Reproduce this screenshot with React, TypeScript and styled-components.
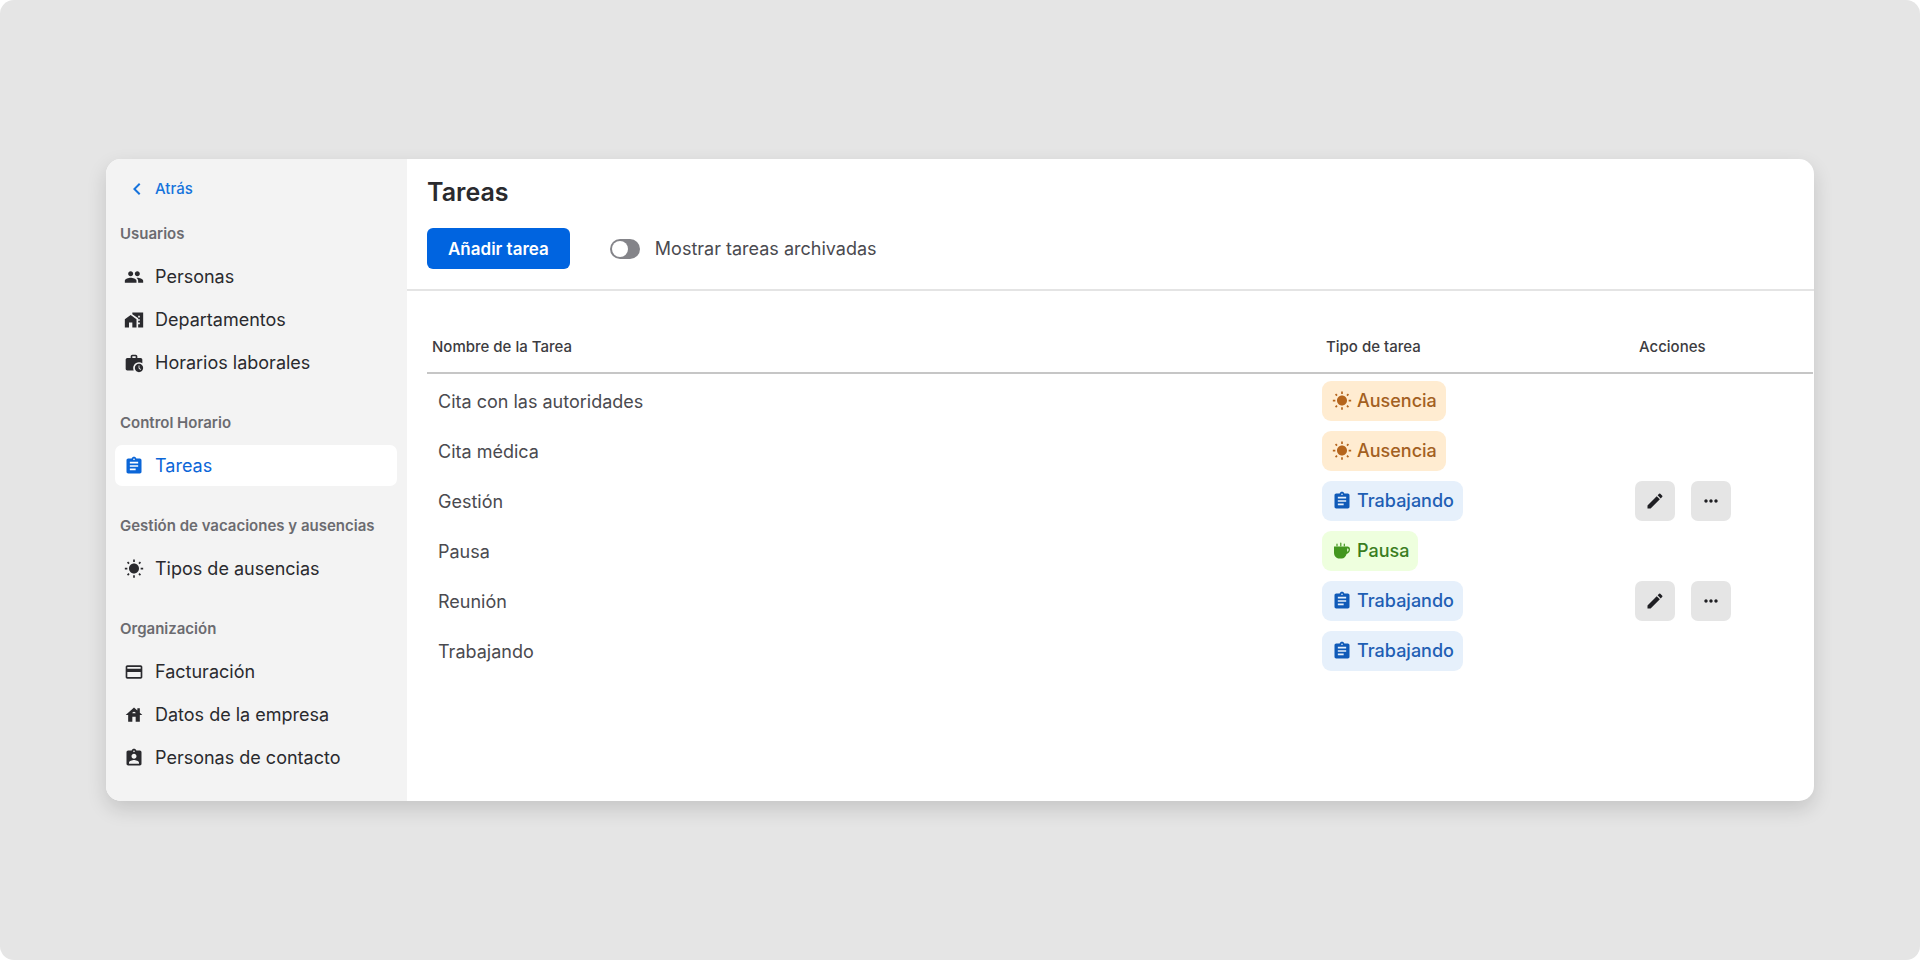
import React from 'react';
import styled, { createGlobalStyle, css } from 'styled-components';
import {
  MdAssignment,
  MdAssignmentInd,
  MdChevronLeft,
  MdCreditCard,
  MdEdit,
  MdGroup,
  MdHomeWork,
  MdHouse,
  MdMoreHoriz,
  MdWbSunny,
  MdWorkHistory,
} from 'react-icons/md';

const GlobalStyle = createGlobalStyle`
  *, *::before, *::after { box-sizing: border-box; }
  body {
    margin: 0;
    background: #fff;
    font-family: Inter, Roboto, "Liberation Sans", sans-serif;
    color: #2a2a2e;
  }
  button, input { font: inherit; }
`;

const Page = styled.div`
  min-height: 100vh;
  display: flex;
  align-items: center;
  padding: 40px 106px;
  background: #e5e5e5;
  border-radius: 14px;
`;

const Window = styled.div`
  flex: 1;
  min-width: 0;
  display: flex;
  border-radius: 15px;
  overflow: hidden;
  background: #fff;
  box-shadow: 0 8px 20px rgba(0, 0, 0, 0.14);
`;

const Sidebar = styled.nav`
  flex: 0 0 301px;
  display: flex;
  flex-direction: column;
  padding: 20px 10px 23px 9px;
  background: #f3f3f3;
`;

const BackLink = styled.a`
  display: flex;
  align-items: center;
  gap: 6px;
  height: 20px;
  margin: 0 0 25px 10px;
  font-size: 15px;
  line-height: 20px;
  font-weight: 500;
  color: #1673dc;
  text-decoration: none;
`;

const Sections = styled.div`
  display: flex;
  flex-direction: column;
  gap: 30px;
`;

const SectionTitle = styled.h2`
  margin: 0 0 12px;
  padding-left: 5px;
  font-size: 15px;
  line-height: 20px;
  font-weight: 600;
  color: #6b6b70;
  white-space: nowrap;
`;

const NavList = styled.ul`
  display: flex;
  flex-direction: column;
  gap: 2px;
  margin: 0;
  padding: 0;
  list-style: none;
`;

const NavLink = styled.a<{ $active?: boolean }>`
  display: flex;
  align-items: center;
  gap: 11px;
  height: 41px;
  padding: 0 9px;
  border-radius: 7px;
  font-size: 18px;
  line-height: 24px;
  color: #2a2a2e;
  text-decoration: none;
  white-space: nowrap;
  ${(p) =>
    p.$active &&
    css`
      background: #fff;
      color: #0b66d8;
    `}
`;

const Main = styled.main`
  flex: 1;
  min-width: 0;
`;

const Header = styled.header`
  padding: 17px 20px 20px;
  border-bottom: 2px solid #e4e4e4;
`;

const Title = styled.h1`
  margin: 0 0 20px;
  font-size: 25px;
  line-height: 32px;
  font-weight: 600;
  color: #2a2a2e;
`;

const Toolbar = styled.div`
  display: flex;
  align-items: center;
  gap: 40px;
`;

const PrimaryButton = styled.button`
  height: 41px;
  padding: 0 21px;
  border: 0;
  border-radius: 6px;
  background: #0064e0;
  color: #fff;
  font-size: 17px;
  font-weight: 600;
`;

const SwitchLabel = styled.label`
  display: flex;
  align-items: center;
  gap: 15px;
  font-size: 18px;
  line-height: 24px;
  color: #4a4a4f;
`;

const Switch = styled.input`
  appearance: none;
  display: flex;
  width: 30px;
  height: 20px;
  margin: 0;
  padding: 2px;
  border-radius: 10px;
  background: #848489;
  &::before {
    content: '';
    width: 16px;
    height: 16px;
    border-radius: 50%;
    background: #fff;
  }
  &:checked {
    justify-content: flex-end;
    background: #0064e0;
  }
`;

const TableArea = styled.div`
  padding: 30px 1px 0 20px;
`;

const Table = styled.table`
  width: 100%;
  table-layout: fixed;
  border-collapse: separate;
  border-spacing: 0;
`;

const HeadCell = styled.th<{ $width?: number }>`
  width: ${(p) => (p.$width ? `${p.$width}px` : 'auto')};
  height: 53px;
  padding: 0 5px;
  border-bottom: 2px solid #c6c6c6;
  text-align: left;
  font-size: 15px;
  line-height: 20px;
  font-weight: 500;
  color: #3c3c41;
`;

const Cell = styled.td<{ $text?: boolean }>`
  height: 50px;
  padding: ${(p) => (p.$text ? '6px 11px 0' : '4px 1px 0')};
  font-size: 18px;
  line-height: 24px;
  color: #4a4a4f;
`;

type Kind = 'absence' | 'work' | 'break';

const tones: Record<Kind, { bg: string; fg: string; icon: string }> = {
  absence: { bg: '#ffecd1', fg: '#a3601f', icon: '#b5651d' },
  work: { bg: '#e6f0fb', fg: '#1f5fb4', icon: '#0f5ab8' },
  break: { bg: '#eeffde', fg: '#3a7d1e', icon: '#43971f' },
};

const Badge = styled.span<{ $kind: Kind }>`
  display: inline-flex;
  align-items: center;
  gap: 5px;
  height: 40px;
  padding: 0 9px 0 10px;
  border-radius: 9px;
  font-size: 18px;
  font-weight: 500;
  vertical-align: middle;
  background: ${(p) => tones[p.$kind].bg};
  color: ${(p) => tones[p.$kind].fg};
  svg { color: ${(p) => tones[p.$kind].icon}; }
`;

const Actions = styled.div`
  display: flex;
  gap: 16px;
`;

const IconButton = styled.button`
  display: flex;
  align-items: center;
  justify-content: center;
  width: 40px;
  height: 40px;
  padding: 0;
  border: 0;
  border-radius: 7px;
  background: #e5e5e5;
  color: #1f1f23;
`;

function CupIcon({ size }: { size: number }) {
  return (
    <svg width={size} height={size} viewBox="0 0 20 20" aria-hidden="true">
      <path
        fill="currentColor"
        fillRule="evenodd"
        d="M2 5.500h13.400c1.600 0 2.600 1.100 2.600 2.700 0 2.300-1.300 4.200-3.400 4.800-.8 2.700-2.600 4.500-4.900 4.500H7.300C4.200 17.500 2 15 2 11.500zm13.200 1.900v3.400c.9-.4 1.400-1.200 1.400-2.300 0-.7-.4-1.100-1.400-1.100z"
      />
      <path
        d="M5 3.200v1.600M8.800 2.200v2.600M12.300 3.200v1.600"
        fill="none"
        stroke="currentColor"
        strokeWidth="1.200"
        strokeLinecap="round"
      />
    </svg>
  );
}

const sections = [
  {
    title: 'Usuarios',
    items: [
      { label: 'Personas', Icon: MdGroup },
      { label: 'Departamentos', Icon: MdHomeWork },
      { label: 'Horarios laborales', Icon: MdWorkHistory },
    ],
  },
  { title: 'Control Horario', items: [{ label: 'Tareas', Icon: MdAssignment, active: true }] },
  {
    title: 'Gestión de vacaciones y ausencias',
    items: [{ label: 'Tipos de ausencias', Icon: MdWbSunny }],
  },
  {
    title: 'Organización',
    items: [
      { label: 'Facturación', Icon: MdCreditCard },
      { label: 'Datos de la empresa', Icon: MdHouse },
      { label: 'Personas de contacto', Icon: MdAssignmentInd },
    ],
  },
] as { title: string; items: { label: string; Icon: React.ComponentType<{ size: number }>; active?: boolean }[] }[];

const kinds = {
  absence: { label: 'Ausencia', Icon: MdWbSunny },
  work: { label: 'Trabajando', Icon: MdAssignment },
  break: { label: 'Pausa', Icon: CupIcon },
};

const tasks: { name: string; kind: Kind; editable?: boolean }[] = [
  { name: 'Cita con las autoridades', kind: 'absence' },
  { name: 'Cita médica', kind: 'absence' },
  { name: 'Gestión', kind: 'work', editable: true },
  { name: 'Pausa', kind: 'break' },
  { name: 'Reunión', kind: 'work', editable: true },
  { name: 'Trabajando', kind: 'work' },
];

export default function App() {
  return (
    <>
      <GlobalStyle />
      <Page>
        <Window>
          <Sidebar>
            <BackLink href="#">
              <MdChevronLeft size={24} />
              Atrás
            </BackLink>
            <Sections>
              {sections.map((section) => (
                <section key={section.title}>
                  <SectionTitle>{section.title}</SectionTitle>
                  <NavList>
                    {section.items.map(({ label, Icon, active }) => (
                      <li key={label}>
                        <NavLink href="#" $active={active} aria-current={active ? 'page' : undefined}>
                          <Icon size={20} />
                          {label}
                        </NavLink>
                      </li>
                    ))}
                  </NavList>
                </section>
              ))}
            </Sections>
          </Sidebar>
          <Main>
            <Header>
              <Title>Tareas</Title>
              <Toolbar>
                <PrimaryButton type="button">Añadir tarea</PrimaryButton>
                <SwitchLabel htmlFor="archived">
                  <Switch id="archived" type="checkbox" role="switch" />
                  Mostrar tareas archivadas
                </SwitchLabel>
              </Toolbar>
            </Header>
            <TableArea>
              <Table>
                <thead>
                  <tr>
                    <HeadCell scope="col">Nombre de la Tarea</HeadCell>
                    <HeadCell scope="col" $width={313}>Tipo de tarea</HeadCell>
                    <HeadCell scope="col" $width={179}>Acciones</HeadCell>
                  </tr>
                </thead>
                <tbody>
                  {tasks.map(({ name, kind, editable }) => {
                    const { label, Icon } = kinds[kind];
                    return (
                      <tr key={name}>
                        <Cell $text>{name}</Cell>
                        <Cell>
                          <Badge $kind={kind}>
                            <Icon size={20} />
                            {label}
                          </Badge>
                        </Cell>
                        <Cell>
                          {editable && (
                            <Actions>
                              <IconButton type="button" aria-label={`Editar ${name}`}>
                                <MdEdit size={20} />
                              </IconButton>
                              <IconButton type="button" aria-label={`Más opciones de ${name}`}>
                                <MdMoreHoriz size={20} />
                              </IconButton>
                            </Actions>
                          )}
                        </Cell>
                      </tr>
                    );
                  })}
                </tbody>
              </Table>
            </TableArea>
          </Main>
        </Window>
      </Page>
    </>
  );
}
